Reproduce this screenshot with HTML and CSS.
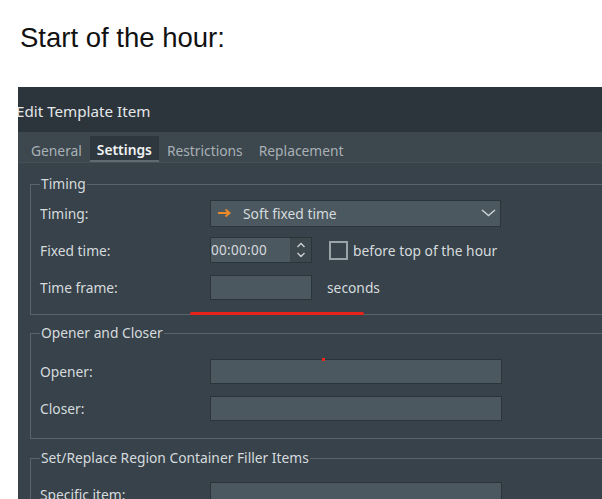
FILE: index.html
```html
<!DOCTYPE html>
<html>
<head>
<meta charset="utf-8">
<link rel="stylesheet" href="styles.css">
</head>
<body>
<p class="caption">Start of the hour:</p>
<div class="window">
  <div class="titlebar"><span class="title">Edit Template Item</span></div>
  <div class="tabs">
    <span class="tab">General</span>
    <span class="tab active">Settings</span>
    <span class="tab">Restrictions</span>
    <span class="tab">Replacement</span>
  </div>
  <div class="pane">
    <fieldset class="group group-timing">
      <legend>Timing</legend>
      <div class="row">
        <span class="label">Timing:</span>
        <div class="combo">
          <svg class="arrow" width="15" height="10" viewBox="0 0 15 10"><path d="M1 5H12M8.5 1.5L12.5 5L8.5 8.5" fill="none" stroke="#e8892c" stroke-width="2"/></svg>
          <span class="combo-text">Soft fixed time</span>
          <svg class="chev" width="15" height="8" viewBox="0 0 15 8"><path d="M1 1L7.5 6.5L14 1" fill="none" stroke="#c9cfd2" stroke-width="1.5"/></svg>
        </div>
      </div>
      <div class="row">
        <span class="label">Fixed time:</span>
        <div class="spin">
          <span class="spin-text">00:00:00</span>
          <span class="spin-btns">
            <svg width="10" height="18" viewBox="0 0 10 18"><path d="M1.5 6L5 2.5L8.5 6M1.5 12L5 15.5L8.5 12" fill="none" stroke="#c9cfd2" stroke-width="1.4"/></svg>
          </span>
        </div>
        <span class="check"></span>
        <span class="check-label">before top of the hour</span>
      </div>
      <div class="row">
        <span class="label">Time frame:</span>
        <div class="input short"></div>
        <span class="unit">seconds</span>
      </div>
    </fieldset>
    <div class="redline"></div>
    <fieldset class="group group-oc">
      <legend>Opener and Closer</legend>
      <div class="row">
        <span class="label">Opener:</span>
        <div class="input long"><span class="reddot"></span></div>
      </div>
      <div class="row">
        <span class="label">Closer:</span>
        <div class="input long"></div>
      </div>
    </fieldset>
    <fieldset class="group group-set">
      <legend>Set/Replace Region Container Filler Items</legend>
      <div class="row">
        <span class="label">Specific item:</span>
        <div class="input long"></div>
      </div>
    </fieldset>
  </div>
</div>
</body>
</html>
```
FILE: styles.css
```css
html, body {
  margin: 0;
  padding: 0;
  background: #ffffff;
  overflow: hidden;
}
.caption {
  margin: 0;
  padding: 22px 0 0 20px;
  height: 87px;
  box-sizing: border-box;
  font-family: "Liberation Sans", Arial, sans-serif;
  font-size: 27.5px;
  line-height: 32px;
  color: #111;
}
.window {
  margin-left: 18px;
  height: 412px;
  background: #37424a;
  overflow: hidden;
  font-family: "Noto Sans", sans-serif;
  font-size: 13.8px;
  color: #d6dbde;
}
.titlebar {
  height: 45px;
  box-sizing: border-box;
  padding-top: 3px;
  background: #2c353b;
  display: flex;
  align-items: center;
  overflow: hidden;
}
.title {
  margin-left: -2px;
  font-size: 15.2px;
  color: #e4e7e9;
}
.tabs {
  height: 30px;
  background: #3c474e;
  display: flex;
  align-items: stretch;
  padding-left: 5px;
  border-bottom: 1px solid #444f56;
}
.tab {
  display: flex;
  align-items: center;
  padding: 2px 8px 0;
  color: #a9b1b5;
  margin-top: 4px;
}
.tab.active {
  background: #2e373d;
  color: #f0f2f3;
  font-weight: 600;
  border-bottom: 2px solid #5f6b71;
  padding: 2px 7px 0;
}
.pane {
  padding: 13px 0 0 12px;
  background: #37424a;
}
.group {
  margin: 0;
  width: 640px;
  box-sizing: border-box;
  border: 1px solid #5a656b;
  border-right: none;
  padding: 0 0 0 9px;
}
.group legend {
  padding: 0 1px;
  margin-left: 0;
  color: #d6dbde;
  line-height: 16px;
}
.group-timing {
  padding-top: 8px;
  padding-bottom: 14px;
}
.group-oc {
  margin-top: 10px;
  padding-top: 17px;
  padding-bottom: 17px;
}
.group-set {
  margin-top: 11px;
  padding-top: 15px;
  padding-bottom: 20px;
}
.row {
  display: flex;
  align-items: center;
  height: 26px;
  margin-bottom: 11px;
}
.row:last-of-type {
  margin-bottom: 0;
}
.label {
  width: 170px;
  flex: none;
}
.combo {
  width: 291px;
  height: 27px;
  box-sizing: border-box;
  background: #4b585f;
  border: 1px solid #2b3439;
  display: flex;
  align-items: center;
  padding: 0 4px 0 6px;
}
.arrow {
  flex: none;
}
.combo-text {
  margin-left: 11px;
  flex: 1;
}
.chev {
  flex: none;
}
.spin {
  width: 102px;
  height: 26px;
  box-sizing: border-box;
  border: 1px solid #2b3439;
  display: flex;
}
.spin-text {
  flex: 1;
  background: #4b585f;
  display: flex;
  align-items: center;
  padding-left: 0;
  font-size: 13.5px;
  letter-spacing: 0.3px;
}
.spin-btns {
  width: 21px;
  background: #3c474e;
  display: flex;
  align-items: center;
  justify-content: center;
}
.check {
  width: 19px;
  height: 19px;
  box-sizing: border-box;
  border: 2px solid #9aa3a8;
  margin-left: 17px;
  flex: none;
}
.check-label {
  margin-left: 5px;
}
.input {
  height: 25px;
  box-sizing: border-box;
  background: #4b585f;
  border: 1px solid #2b3439;
  position: relative;
}
.input.short {
  width: 102px;
}
.input.long {
  width: 292px;
}
.unit {
  margin-left: 15px;
}
.redline {
  margin: -3px 0 0 160px;
  width: 174px;
  height: 3px;
  background: #e5231b;
  border-radius: 2px;
  position: relative;
}
.reddot {
  position: absolute;
  left: 111px;
  top: -2px;
  width: 3px;
  height: 3px;
  background: #ee2418;
}
```
